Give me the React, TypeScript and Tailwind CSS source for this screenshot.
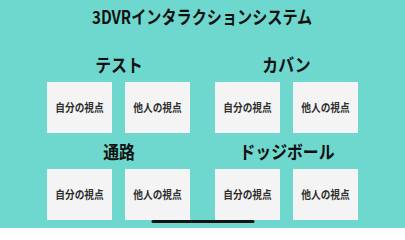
const sections = ["テスト", "カバン", "通路", "ドッジボール"];

const views = ["自分の視点", "他人の視点"];

const ViewButton = ({ label }: { label: string }) => {
  return (
    <button className="w-[65px] h-[51px] bg-[#f4f4f4] flex items-center justify-center">
      <span className="inline-block scale-x-[0.88] text-[11px] leading-none font-bold text-[#2e2e2e] whitespace-nowrap">
        {label}
      </span>
    </button>
  );
};

const App = () => {
  return (
    <div
      className="relative w-[405px] h-[228px] overflow-hidden bg-[#6fd8ce]"
      style={{ fontFamily: '"Noto Sans CJK JP", "Noto Sans", sans-serif' }}
    >
      <h1 className="h-[31px] flex items-center justify-center">
        <span className="inline-block scale-x-[0.84] text-[18px] leading-none font-bold text-[#111] whitespace-nowrap">
          3DVRインタラクションシステム
        </span>
      </h1>
      <div className="mt-[15px] grid grid-cols-[143px_143px] justify-center gap-x-[25px]">
        {sections.map((title) => (
          <div key={title}>
            <h2 className="h-[36px] flex items-center justify-center">
              <span className="inline-block scale-x-[0.88] text-[18px] leading-none font-bold text-[#111] whitespace-nowrap">
                {title}
              </span>
            </h2>
            <div className="flex gap-[13px]">
              {views.map((v) => (
                <ViewButton key={v} label={v} />
              ))}
            </div>
          </div>
        ))}
      </div>
      {/* home indicator */}
      <div className="absolute bottom-[5px] left-1/2 -translate-x-1/2 w-[103px] h-[3px] rounded-full bg-[#111]" />
    </div>
  );
};

export default App;
